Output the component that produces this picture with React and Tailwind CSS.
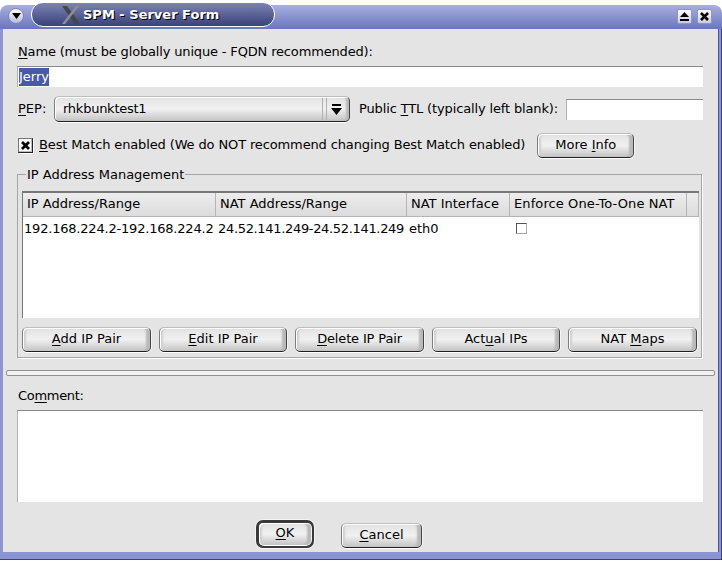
const font = { fontFamily: '"DejaVu Sans", sans-serif' };

const KeramikButton = ({ className = "", children }) => (
  <button className={`relative flex items-center justify-center whitespace-nowrap rounded-[5px] border border-t-[#bdbdbd] border-l-[#7d7d7d] border-r-[#444] border-b-[#1f1f1f] bg-gradient-to-b from-[#e2e2e2] via-[#f1f1f1] to-[#c4c4c4] pb-[2px] text-[13px] text-black shadow-[0_1px_0_#fff,1px_0_0_#f4f4f4,inset_1px_1px_0_#fff,inset_-4px_0_2px_#b9b9b9,inset_3px_0_2px_#d0d0d0] ${className}`}>
    {children}
  </button>
);

const Key = ({ children }) => <span className="underline underline-offset-2">{children}</span>;

const WinButton = ({ children }) => (
  <div className="flex h-[15px] w-[15px] items-center justify-center rounded-[2px] border border-[#8f95c4] bg-gradient-to-b from-[#ffffff] to-[#c9cbe0]">
    {children}
  </div>
);

const TableHead = ({ className = "", children }) => (
  <div className={`flex h-[24px] items-center whitespace-nowrap border-r border-b border-[#b5b5b5] bg-gradient-to-b from-[#ededed] to-[#dcdcdc] pb-[2px] pl-[4px] text-[13px] ${className}`}>
    {children}
  </div>
);

const TitleBar = () => (
  <div className="relative h-[29px] shrink-0 bg-white">
    <div className="absolute inset-x-0 top-[5px] bottom-0 rounded-t-[8px] bg-gradient-to-b from-[#a9afde] to-[#6a75bd]" />
    <div className="absolute left-[8px] top-[8px] flex h-[16px] w-[16px] items-center justify-center rounded-full border border-[#7b82c0] bg-gradient-to-b from-white to-[#b9bcd8]">
      <svg width="9" height="6" viewBox="0 0 9 6"><path d="M0 0H9L4.5 6Z" fill="#000" /></svg>
    </div>
    <div className="absolute left-[31px] top-[2px] flex h-[25px] w-[244px] items-center rounded-[12px] border border-white bg-gradient-to-b from-[#7d83b4] to-[#3b4278] pl-[29px]">
      <svg width="20" height="18" viewBox="0 0 20 18">
        <path d="M1 0L6 0L19 18L14 18Z" fill="#45454f" />
        <path d="M18 0L15 0L1 18L4 18Z" fill="#8f8f96" />
      </svg>
      <span className="ml-[2px] text-[13px] font-bold text-white [text-shadow:1px_1px_0_#000]">SPM - Server Form</span>
    </div>
    <div className="absolute right-[10px] top-[9px] flex gap-[5px]">
      <WinButton>
        <svg width="9" height="9" viewBox="0 0 9 9"><path d="M4.5 0L9 5H0ZM0 7H9V9H0Z" fill="#000" /></svg>
      </WinButton>
      <WinButton>
        <svg width="9" height="9" viewBox="0 0 9 9"><path d="M1 1L8 8M8 1L1 8" stroke="#000" strokeWidth="2.6" /></svg>
      </WinButton>
    </div>
  </div>
);

export default function App() {
  const ipButtons = [
    [<span><Key>A</Key>dd IP Pair</span>, "w-[129px]"],
    [<span><Key>E</Key>dit IP Pair</span>, "w-[128px]"],
    [<span className="tracking-[-0.15px]"><Key>D</Key>elete IP Pair</span>, "w-[129px]"],
    [<span>Act<Key>u</Key>al IPs</span>, "w-[128px]"],
    [<span>NAT <Key>M</Key>aps</span>, "w-[129px]"],
  ];

  return (
    <div style={font} className="flex h-[561px] w-[722px] flex-col overflow-hidden bg-white text-[13px] text-black">
      <TitleBar />
      <div className="mb-[1px] flex min-h-0 flex-1 flex-col border-r border-b border-[#3c4278] bg-[#8d94d4] pb-[7px] pl-[3px] pr-[2px]">
        <div className="flex min-h-0 flex-1 flex-col border-r border-[#4a52a0] bg-[#e4e4e4] pl-[14px] pr-[15px]">
          <div className="mt-[14px] flex h-[18px] items-center pl-[1px]">
            <span className="whitespace-nowrap tracking-[-0.16px]"><Key>N</Key>ame (must be globally unique - FQDN recommended):</span>
          </div>
          <div className="mt-[5px] flex h-[21px] items-center border-t border-l border-t-[#8a8a8a] border-l-[#b0b0b0] bg-white pl-[1px]">
            <span className="bg-[#4a5aaa] leading-[18px] text-white">Jerry</span>
          </div>

          <div className="mt-[9px] flex h-[26px] items-center">
            <span className="w-[37px] pl-[1px]"><Key>P</Key>EP:</span>
            <div className="flex h-[26px] w-[296px] items-center rounded-[5px] border border-t-[#bdbdbd] border-l-[#7d7d7d] border-r-[#444] border-b-[#1f1f1f] bg-gradient-to-b from-[#e2e2e2] via-[#f1f1f1] to-[#c4c4c4] pl-[8px] shadow-[inset_1px_1px_0_#fff,inset_-3px_0_2px_#b9b9b9,0_1px_0_#fff]">
              <span className="flex-1 pb-[1px] tracking-[-0.25px]">rhkbunktest1</span>
              <div className="mr-[4px] h-[22px] w-[5px] border-x border-[#b0b0b0]" />
              <svg className="mr-[7px]" width="11" height="11" viewBox="0 0 11 11"><path d="M1 0H10V2H1ZM0 4H11L5.5 11Z" fill="#000" /></svg>
            </div>
            <span className="ml-[9px] whitespace-nowrap tracking-[-0.14px]">Public <Key>T</Key>TL (typically left blank):</span>
            <div className="ml-auto h-[21px] w-[137px] border-t border-l border-t-[#8a8a8a] border-l-[#b0b0b0] bg-white" />
          </div>

          <div className="mt-[11px] flex h-[25px] items-center">
            <div className="ml-[1px] flex h-[15px] w-[15px] items-center justify-center border border-[#777] border-r-[#222] border-b-[#222] bg-white shadow-[1px_1px_0_#fff,inset_-1px_-1px_0_#bbb]">
              <svg width="9" height="9" viewBox="0 0 9 9"><path d="M1 1L8 8M8 1L1 8" stroke="#000" strokeWidth="2.8" /></svg>
            </div>
            <span className="ml-[6px] whitespace-nowrap pb-[2px] tracking-[-0.13px]"><Key>B</Key>est Match enabled (We do NOT recommend changing Best Match enabled)</span>
            <KeramikButton className="ml-[12px] h-[25px] w-[97px]"><span>More <Key>I</Key>nfo</span></KeramikButton>
          </div>

          {/* group box */}
          <div className="relative mt-[16px] h-[185px] border border-[#a5a5a5] border-r-white border-b-white pl-[4px] pr-[3px] pt-[16px] shadow-[inset_-1px_-1px_0_#a5a5a5]">
            <span className="absolute left-[8px] top-[-9px] bg-[#e4e4e4] px-[1px] leading-[17px]">IP Address Management</span>
            <div className="h-[127px] border-t-2 border-l border-t-[#777] border-l-[#777] bg-white">
              <div className="flex">
                <TableHead className="w-[193px]">IP Address/Range</TableHead>
                <TableHead className="w-[191px]">NAT Address/Range</TableHead>
                <TableHead className="w-[103px]">NAT Interface</TableHead>
                <TableHead className="w-[177px] tracking-[0.1px]">Enforce One-To-One NAT</TableHead>
                <TableHead className="w-[12px]" />
              </div>
              <div className="flex h-[24px] items-center whitespace-nowrap">
                <span className="w-[195px] pl-[1px] tracking-[-0.2px]">192.168.224.2-192.168.224.2</span>
                <span className="w-[191px] tracking-[-0.33px]">24.52.141.249-24.52.141.249</span>
                <span className="w-[107px]">eth0</span>
                <div className="mb-[2px] h-[11px] w-[11px] border border-[#555] border-r-[#aaa] border-b-[#aaa] bg-white" />
              </div>
            </div>
            <div className="mt-[9px] flex gap-[8px]">
              {ipButtons.map(([label, width], i) => (
                <KeramikButton key={i} className={`h-[25px] ${width}`}>{label}</KeramikButton>
              ))}
            </div>
          </div>

          {/* splitter */}
          <div className="ml-[-11px] mr-[-12px] mt-[11px] h-[6px] rounded-[2px] border border-[#8f8f8f] bg-[#f2f2f2]" />

          <div className="mt-[11px] flex h-[18px] items-center pl-[1px]">
            <span className="tracking-[-0.3px]">Co<Key>m</Key>ment:</span>
          </div>
          <div className="mt-[5px] h-[92px] border-t border-l border-t-[#8a8a8a] border-l-[#b0b0b0] bg-white" />

          <div className="mt-[18px] flex items-end pl-[239px]">
            <div className="flex h-[28px] w-[58px] items-center justify-center rounded-[7px] border-[3px] border-[#3a3a3a] shadow-[0_0_0_1px_#f4f4f4]">
              <KeramikButton className="h-[22px] w-[52px] border-0">
                <span><Key>O</Key>K</span>
              </KeramikButton>
            </div>
            <KeramikButton className="ml-[27px] h-[25px] w-[81px]"><span><Key>C</Key>ancel</span></KeramikButton>
          </div>
        </div>
      </div>
    </div>
  );
}
